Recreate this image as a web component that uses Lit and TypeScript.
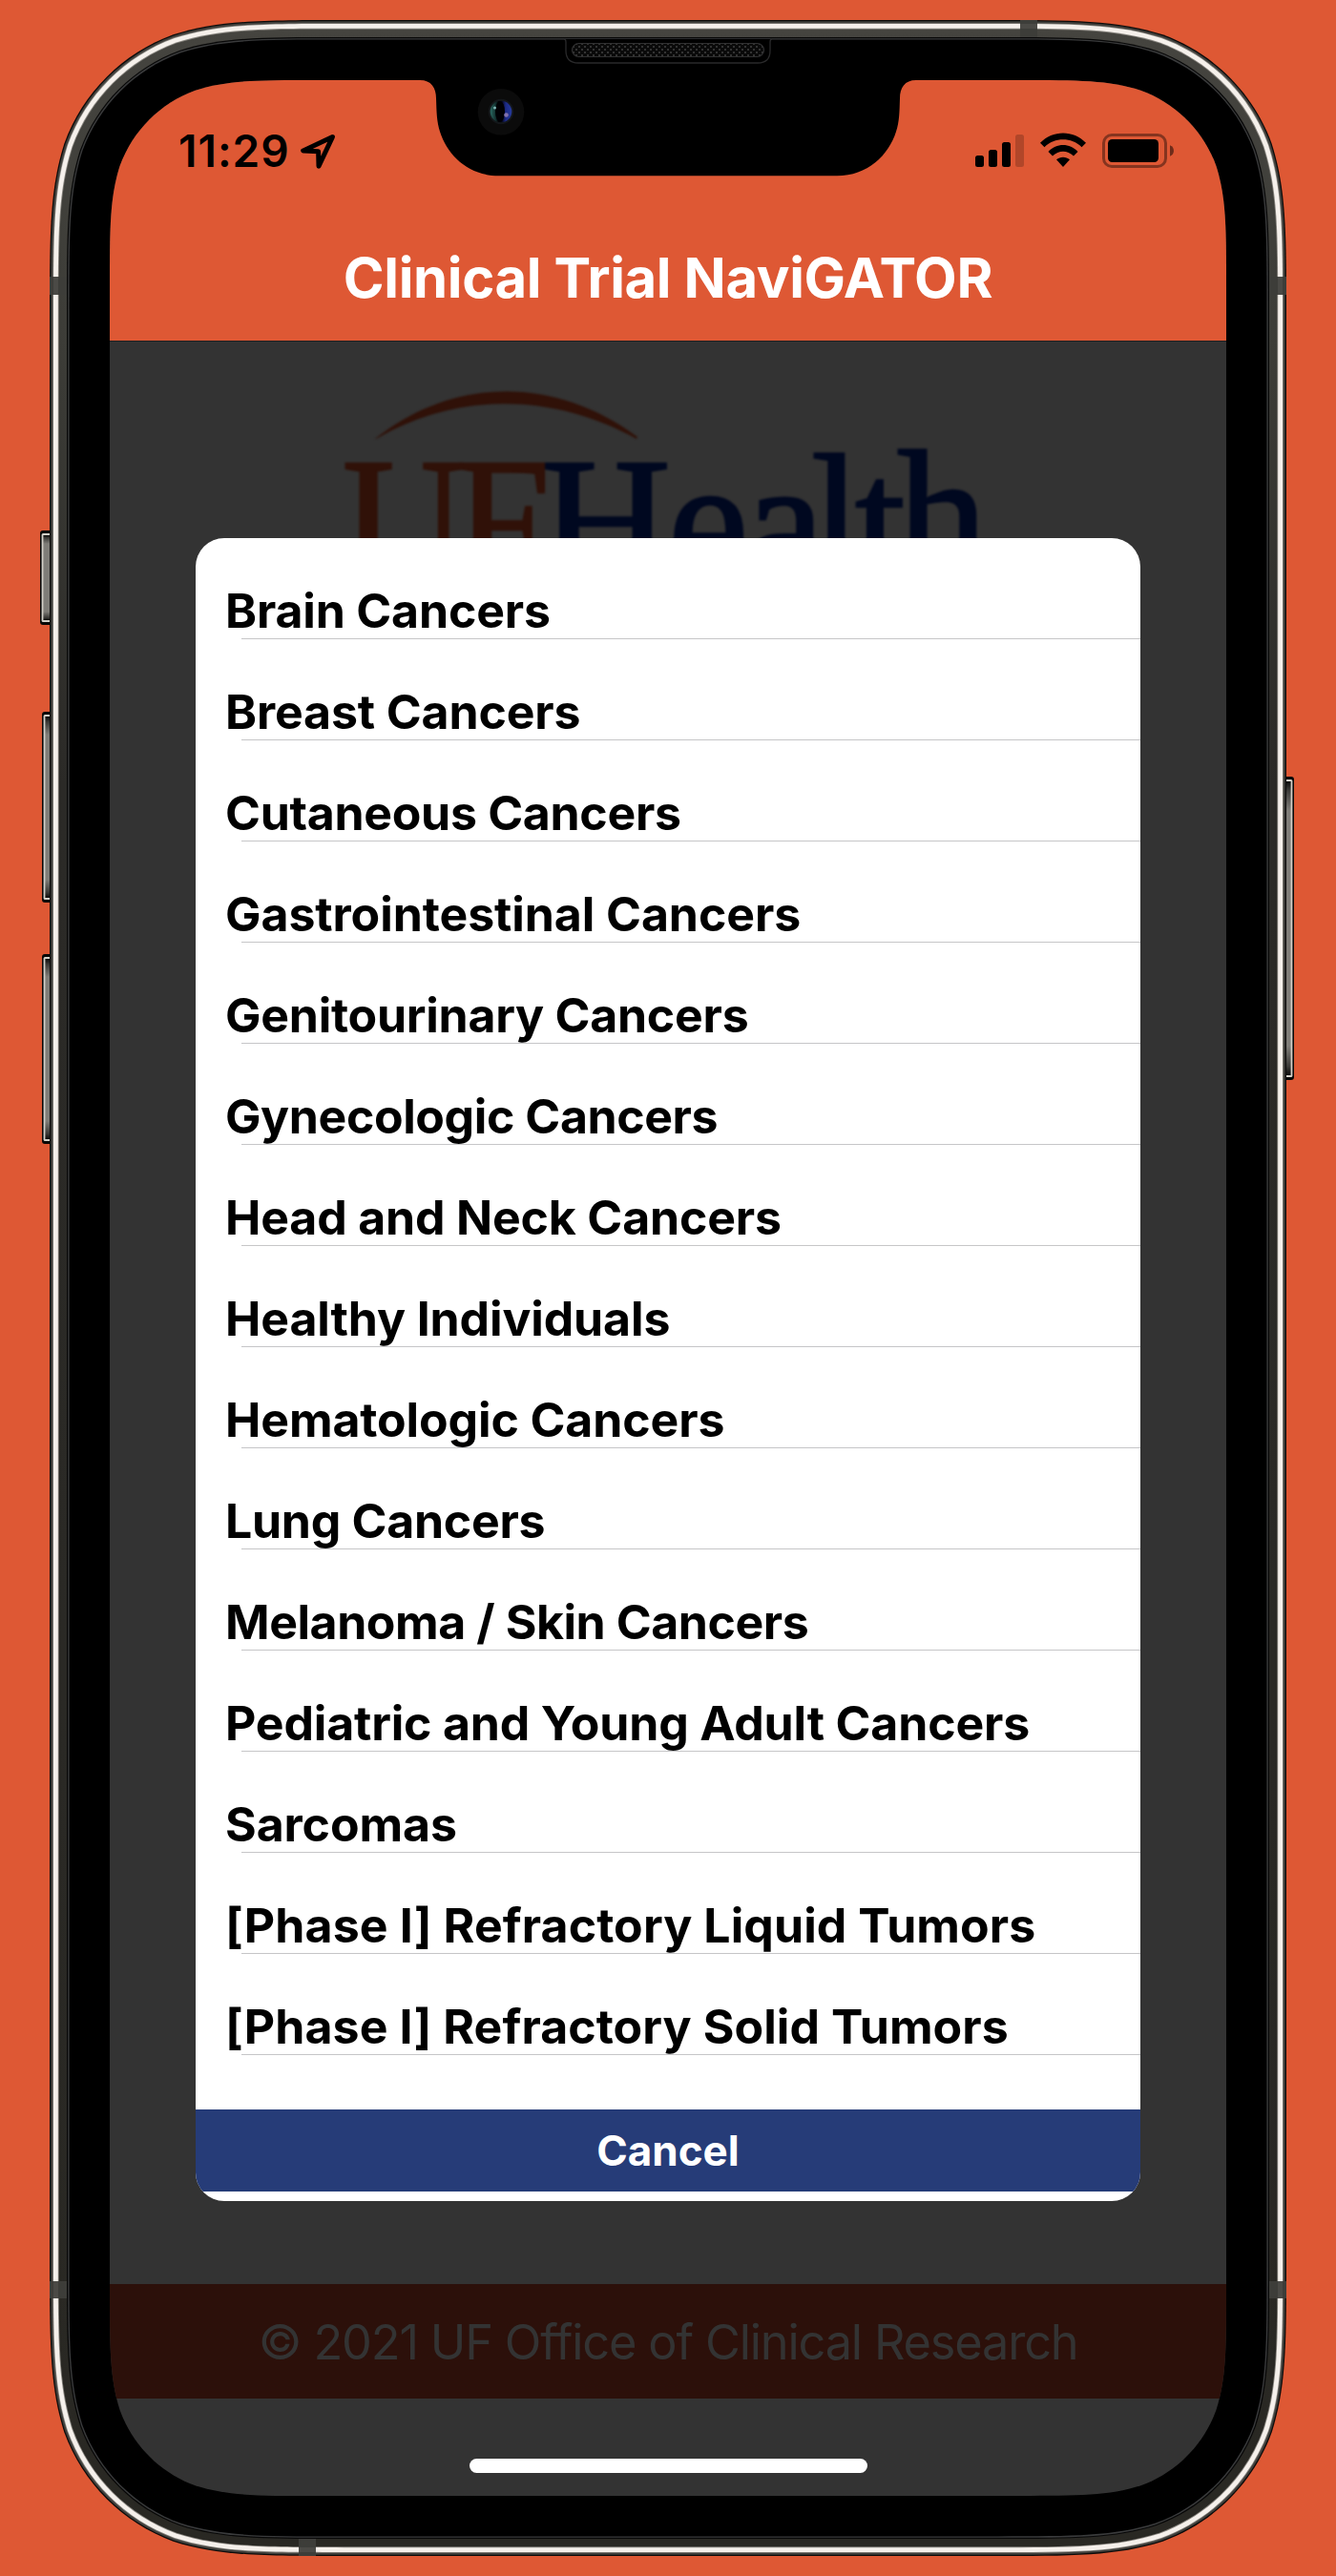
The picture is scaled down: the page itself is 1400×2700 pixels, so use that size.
import { LitElement, html, css, svg } from "lit";
import { customElement } from "lit/decorators.js";

/** Continuous-curvature rounded rectangle as SVG path data. */
function squircle(x: number, y: number, w: number, h: number, r: number): string {
  const a = 1.52866483 * r;
  const b = 1.08849323 * r;
  const c = 0.86840689 * r;
  const d = 0.63149399 * r;
  const e = 0.37282392 * r;
  const f = 0.16906 * r;
  const g = 0.074911 * r;
  const R = x + w;
  const B = y + h;
  return [
    `M${x + a} ${y}`,
    `L${R - a} ${y}`,
    `C${R - b} ${y} ${R - c} ${y} ${R - d} ${y + g}`,
    `C${R - e} ${y + f} ${R - f} ${y + e} ${R - g} ${y + d}`,
    `C${R} ${y + c} ${R} ${y + b} ${R} ${y + a}`,
    `L${R} ${B - a}`,
    `C${R} ${B - b} ${R} ${B - c} ${R - g} ${B - d}`,
    `C${R - f} ${B - e} ${R - e} ${B - f} ${R - d} ${B - g}`,
    `C${R - c} ${B} ${R - b} ${B} ${R - a} ${B}`,
    `L${x + a} ${B}`,
    `C${x + b} ${B} ${x + c} ${B} ${x + d} ${B - g}`,
    `C${x + e} ${B - f} ${x + f} ${B - e} ${x + g} ${B - d}`,
    `C${x} ${B - c} ${x} ${B - b} ${x} ${B - a}`,
    `L${x} ${y + a}`,
    `C${x} ${y + b} ${x} ${y + c} ${x + g} ${y + d}`,
    `C${x + f} ${y + e} ${x + e} ${y + f} ${x + d} ${y + g}`,
    `C${x + c} ${y} ${x + b} ${y} ${x + a} ${y}Z`,
  ].join("");
}

const FRAME = { x: 52, y: 21, w: 1296, h: 2658, r: 205 };

const LAYERS: [number, string][] = [
  [0, "#0b0b0a"],
  [1.3, "#42413d"],
  [3.2, "#85827c"],
  [4, "#f5f0eb"],
  [8.8, "#85827c"],
  [9.7, "url(#band)"],
  [18, "#070707"],
  [19.2, "#3a3b3c"],
  [20.6, "#000000"],
];

@customElement("device-frame")
export class DeviceFrame extends LitElement {
  static styles = css`
    :host {
      display: block;
    }
    .art {
      display: block;
      width: 1400px;
      height: 2700px;
    }
  `;

  private layer([inset, fill]: [number, string]) {
    const { x, y, w, h, r } = FRAME;
    return svg`<path d=${squircle(x + inset, y + inset, w - 2 * inset, h - 2 * inset, r - inset)} fill=${fill}></path>`;
  }

  private key(x: number, y: number, w: number, h: number, side: "l" | "r") {
    const left = side === "l";
    return svg`
      <rect x=${left ? x : x - 6} y=${y} width=${w + 6} height=${h} rx="3" fill="#080807"></rect>
      <rect x=${left ? x + 1.6 : x - 6} y=${y + 3} width=${w + 4.4} height=${h - 6} rx="1.5" fill="#d3d0c8"></rect>
      <rect x=${left ? x + 3.4 : x - 6} y=${y + 5} width=${w + 2.6} height=${h - 10} fill="url(#key)"></rect>`;
  }

  render() {
    return html`
      <svg class="art" viewBox="0 0 1400 2700" aria-hidden="true">
        <defs>
          <linearGradient id="band" x1="0" y1="0" x2="0" y2="1">
            <stop offset="0" stop-color="#45443f"></stop>
            <stop offset="0.13" stop-color="#3c3c37"></stop>
            <stop offset="0.3" stop-color="#2b2a27"></stop>
            <stop offset="1" stop-color="#292823"></stop>
          </linearGradient>
          <linearGradient id="key" x1="0" y1="0" x2="0" y2="1">
            <stop offset="0" stop-color="#0a0a09"></stop>
            <stop offset="0.03" stop-color="#3a3936"></stop>
            <stop offset="0.1" stop-color="#7f7d78"></stop>
            <stop offset="0.9" stop-color="#7f7d78"></stop>
            <stop offset="0.97" stop-color="#3a3936"></stop>
            <stop offset="1" stop-color="#0a0a09"></stop>
          </linearGradient>
          <pattern id="mesh" width="6" height="6" patternUnits="userSpaceOnUse">
            <rect width="6" height="6" fill="#0a0a0a"></rect>
            <rect x="0" y="0" width="2" height="2" fill="#333333"></rect>
            <rect x="3" y="3" width="2" height="2" fill="#333333"></rect>
          </pattern>
        </defs>
        ${this.key(42, 556, 10, 99, "l")} ${this.key(44, 746, 8, 200, "l")}
        ${this.key(44, 1000, 8, 199, "l")} ${this.key(1348, 814, 8, 318, "r")}
        ${LAYERS.map((l) => this.layer(l))}
        <g fill="#3d3d39">
          <rect x="52" y="290" width="18" height="19"></rect>
          <rect x="1330" y="290" width="18" height="19"></rect>
          <rect x="52" y="2391" width="18" height="18"></rect>
          <rect x="1330" y="2391" width="18" height="18"></rect>
          <rect x="1069" y="21" width="18" height="18"></rect>
          <rect x="313" y="2661" width="18" height="18"></rect>
        </g>
        <g fill="#4b4a46">
          <rect x="56" y="290" width="5" height="19"></rect>
          <rect x="1339" y="290" width="5" height="19"></rect>
          <rect x="56" y="2391" width="5" height="18"></rect>
          <rect x="1339" y="2391" width="5" height="18"></rect>
          <rect x="1069" y="25" width="18" height="5"></rect>
          <rect x="313" y="2670" width="18" height="5"></rect>
        </g>
        <path d="M591 41q2 0 2 3v9q0 13 13 13h188q13 0 13 -13v-9q0 -3 2 -3" fill="#000000" stroke="#2a2a2b" stroke-width="1.3"></path>
        <rect x="599.5" y="45.5" width="201" height="14" rx="7" fill="url(#mesh)" stroke="#303031" stroke-width="1.2"></rect>
      </svg>
    `;
  }
}

@customElement("device-notch")
export class DeviceNotch extends LitElement {
  static styles = css`
    :host {
      display: block;
    }
    .art {
      display: block;
      width: 520px;
      height: 101px;
    }
  `;

  render() {
    return html`
      <svg class="art" viewBox="440 84 520 101" aria-hidden="true">
        <defs>
          <linearGradient id="lens" x1="0" y1="0" x2="1" y2="0">
            <stop offset="0" stop-color="#2b6a62"></stop>
            <stop offset="0.25" stop-color="#12302f"></stop>
            <stop offset="0.38" stop-color="#020205"></stop>
            <stop offset="0.55" stop-color="#05061a"></stop>
            <stop offset="0.72" stop-color="#1c2a86"></stop>
            <stop offset="1" stop-color="#263a9c"></stop>
          </linearGradient>
        </defs>
        <path
          d="M440 84C452 84 457 92 457 103C457.500 118 457.500 127 461 138C469 163 491 184.300 523 184.300L877 184.300C909 184.300 931 163 939 138C942.500 127 942.500 118 943 103C943 92 948 84 960 84Z"
          fill="#000000"
        ></path>
        <circle cx="525" cy="117.300" r="24.300" fill="#0b0b0b"></circle>
        <circle cx="525" cy="117" r="13.200" fill="#14171a"></circle>
        <circle cx="525" cy="117" r="11.300" fill="url(#lens)"></circle>
        <ellipse cx="524" cy="117" rx="5" ry="11" fill="#000004"></ellipse>
        <circle cx="518.500" cy="113" r="1.500" fill="#7fb5b5"></circle>
        <circle cx="530.500" cy="120.500" r="2.300" fill="#8272ad"></circle>
      </svg>
    `;
  }
}

@customElement("status-bar")
export class StatusBar extends LitElement {
  static styles = css`
    :host {
      display: flex;
      justify-content: space-between;
      align-items: flex-start;
      box-sizing: border-box;
      height: 172px;
      padding: 47px 54px 0 72px;
      color: #000;
    }
    .left,
    .right {
      display: flex;
    }
    .time {
      font: 600 46px/54px Inter, "Liberation Sans", sans-serif;
      width: 127px;
      letter-spacing: 1px;
      white-space: nowrap;
    }
    .arrow {
      width: 38px;
      height: 38px;
      margin-top: 9px;
    }
    .glyphs {
      width: 210px;
      height: 38px;
      margin-top: 8px;
    }
  `;

  render() {
    return html`
      <div class="left">
        <span class="time">11:29</span>
        <svg class="arrow" viewBox="314 140 38 38" fill="none" stroke="#000" stroke-width="5" stroke-linejoin="round" stroke-linecap="round">
          <path d="M348.400 143.600L317.700 157.900L333.600 158.700L334 174.200Z"></path>
        </svg>
      </div>
      <div class="right">
        <svg class="glyphs" viewBox="1021 139 210 38">
          <rect x="1022" y="163" width="9" height="12" rx="2.500"></rect>
          <rect x="1036" y="157" width="9" height="18" rx="2.500"></rect>
          <rect x="1050" y="149" width="9" height="26" rx="2.500"></rect>
          <rect x="1064" y="141" width="9" height="34" rx="2.500" opacity="0.200"></rect>
          <path d="M1090 149.800C1103 136 1125 136 1138 149.800L1133.500 154.300C1123 143.700 1105 143.700 1094.500 154.300Z"></path>
          <path d="M1098.500 159C1107 149.800 1121 149.800 1129.500 159L1125 163.500C1118.500 157 1109.500 157 1103 163.500Z"></path>
          <path d="M1107 167.300C1111 163.800 1117 163.800 1121 167.300L1114 175Z"></path>
          <rect x="1156.500" y="141.500" width="65" height="33" rx="8.500" fill="none" stroke="#000" stroke-width="3" opacity="0.400"></rect>
          <rect x="1161" y="146" width="53" height="24" rx="4.500"></rect>
          <path d="M1226 152.200C1231.300 154 1231.300 162 1226 163.800Z" opacity="0.500"></path>
        </svg>
      </div>
    `;
  }
}

@customElement("health-logo")
export class HealthLogo extends LitElement {
  static styles = css`
    :host {
      display: block;
    }
    .logo {
      display: block;
      width: 720px;
      height: 240px;
      filter: blur(0.8px);
    }
    .word {
      font-family: "Liberation Serif", serif;
      font-size: 190px;
      stroke-width: 2.6px;
    }
    .warm {
      fill: #301108;
      stroke: #301108;
    }
    .cool {
      fill: #000820;
      stroke: #000820;
    }
    .arc {
      stroke: none;
    }
  `;

  render() {
    const squeeze = 0.94;
    const at = (k: number, ...xs: number[]) => xs.map((x) => (x / k).toFixed(1)).join(" ");
    return html`
      <svg class="logo" viewBox="340 400 720 240">
        <path class="warm arc" d="M393 460C476 394 582 394 668 458L667 460C580 412 480 410 394 460Z"></path>
        <text class="word cool" x=${at(1, 566, 700, 780, 850, 896, 940)} y="611 611 611 608 611 604">Health</text>
        <g transform="scale(${squeeze} 1)">
          <text class="word warm" x=${at(squeeze, 359, 477)} y="611">UF</text>
        </g>
      </svg>
    `;
  }
}

interface Category {
  name: string;
  tracking: number;
}

@customElement("category-picker")
export class CategoryPicker extends LitElement {
  static properties = { items: { type: Array } };

  items: Category[] = [];

  static styles = css`
    :host {
      display: flex;
      flex-direction: column;
      box-sizing: border-box;
      width: 990px;
      height: 1743px;
      background: #fff;
      border-radius: 30px;
      overflow: hidden;
      font-family: Inter, "Liberation Sans", sans-serif;
    }
    .list {
      flex: 1;
      margin: 0;
      padding: 0;
      list-style: none;
    }
    .row {
      display: flex;
      flex-direction: column;
      height: 106px;
    }
    .label {
      flex: none;
      padding: 47px 0 0 31px;
      font-size: 50px;
      line-height: 58px;
      font-weight: 700;
      white-space: nowrap;
      color: #000;
    }
    .rule {
      flex: none;
      height: 1px;
      margin-left: 48px;
      background: #c6c6c8;
    }
    .cancel {
      flex: none;
      height: 86px;
      margin: 0 0 10px;
      padding: 0;
      border: 0;
      background: #263c78;
      color: #fff;
      font: 700 44px/86px Inter, "Liberation Sans", sans-serif;
      text-align: center;
    }
  `;

  render() {
    return html`
      <ul class="list">
        ${this.items.map(
          ({ name, tracking }) => html`<li class="row">
            <span class="label" style="letter-spacing: ${tracking}px">${name}</span><span class="rule"></span>
          </li>`,
        )}
      </ul>
      <button class="cancel">Cancel</button>
    `;
  }
}

const CATEGORIES: Category[] = [
  { name: "Brain Cancers", tracking: -0.17 },
  { name: "Breast Cancers", tracking: -0.14 },
  { name: "Cutaneous Cancers", tracking: -0.31 },
  { name: "Gastrointestinal Cancers", tracking: -0.08 },
  { name: "Genitourinary Cancers", tracking: -0.26 },
  { name: "Gynecologic Cancers", tracking: -0.41 },
  { name: "Head and Neck Cancers", tracking: -0.17 },
  { name: "Healthy Individuals", tracking: -0.12 },
  { name: "Hematologic Cancers", tracking: -0.12 },
  { name: "Lung Cancers", tracking: -0.29 },
  { name: "Melanoma / Skin Cancers", tracking: -0.44 },
  { name: "Pediatric and Young Adult Cancers", tracking: -0.17 },
  { name: "Sarcomas", tracking: -0.11 },
  { name: "[Phase I] Refractory Liquid Tumors", tracking: 0.1 },
  { name: "[Phase I] Refractory Solid Tumors", tracking: 0.07 },
];

@customElement("app-root")
export class AppRoot extends LitElement {
  static styles = css`
    :host {
      display: block;
      position: relative;
      box-sizing: border-box;
      width: 1400px;
      height: 2700px;
      padding: 84px 115px;
      background: #de5834;
      overflow: hidden;
      font-family: Inter, "Liberation Sans", sans-serif;
    }
    .frame {
      position: absolute;
      inset: 0;
    }
    .screen {
      position: relative;
      display: flex;
      flex-direction: column;
      width: 1170px;
      height: 2532px;
      background: #333;
    }
    .header {
      height: 273px;
      background: #de5834;
      border-bottom: 1px solid #1f1f20;
    }
    .title {
      margin: 0;
      font-size: 58px;
      line-height: 70px;
      font-weight: 700;
      letter-spacing: -0.37px;
      color: #fff;
      text-align: center;
      white-space: nowrap;
    }
    .content {
      flex: 1;
      display: flex;
      flex-direction: column;
      align-items: center;
      padding-top: 42px;
    }
    .footer {
      height: 120px;
      background: #2c100a;
      color: #333;
      font-size: 50.5px;
      line-height: 121px;
      font-weight: 400;
      letter-spacing: -1.18px;
      text-align: center;
      white-space: nowrap;
    }
    .home {
      display: flex;
      justify-content: center;
      align-items: flex-start;
      height: 39px;
      padding-top: 63px;
    }
    .pill {
      width: 417px;
      height: 15px;
      border-radius: 7.5px;
      background: #fff;
    }
    .dialog {
      position: absolute;
      left: 90px;
      top: 480px;
    }
    .notch {
      position: absolute;
      left: 325px;
      top: 0;
    }
  `;

  render() {
    return html`
      <device-frame class="frame"></device-frame>
      <main class="screen" style="clip-path: path('${squircle(0, 0, 1170, 2532, 142)}')">
        <header class="header">
          <status-bar></status-bar>
          <h1 class="title">Clinical Trial NaviGATOR</h1>
        </header>
        <section class="content"><health-logo></health-logo></section>
        <footer class="footer">© 2021 UF Office of Clinical Research</footer>
        <div class="home"><span class="pill"></span></div>
        <category-picker class="dialog" .items=${CATEGORIES}></category-picker>
        <device-notch class="notch"></device-notch>
      </main>
    `;
  }
}
